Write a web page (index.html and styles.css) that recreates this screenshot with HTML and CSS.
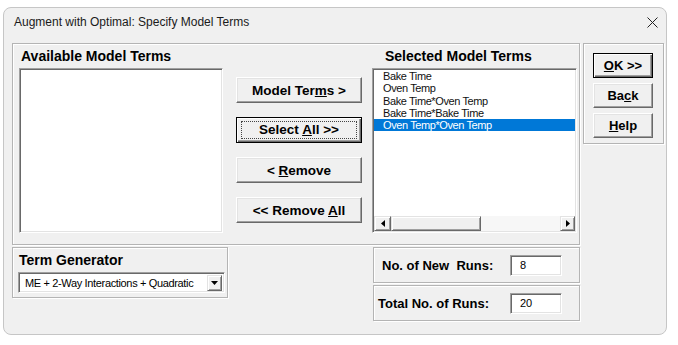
FILE: index.html
```html
<!DOCTYPE html>
<html lang="en">
<head>
    <meta charset="UTF-8">
    <title>Augment with Optimal: Specify Model Terms</title>
    <link rel="stylesheet" href="styles.css">
</head>
<body>

<div class="dialog">
    <div class="titlebar">
        <span class="title">Augment with Optimal: Specify Model Terms</span>
        <svg class="close" width="11" height="11" viewBox="0 0 11 11">
            <path d="M0.5 0.5 L10.5 10.5 M10.5 0.5 L0.5 10.5" stroke="#222" stroke-width="1"/>
        </svg>
    </div>

    <div class="content">
        <div class="top-row">
            <div class="group main-panel">
                <div class="col col-left">
                    <div class="heading">Available Model Terms</div>
                    <div class="listbox"></div>
                </div>

                <div class="col col-mid">
                    <button class="btn wide"><span>Model Ter<u>m</u>s &gt;</span></button>
                    <button class="btn wide default"><span class="focus">Select <u>A</u>ll &gt;&gt;</span></button>
                    <button class="btn wide"><span>&lt; <u>R</u>emove</span></button>
                    <button class="btn wide"><span>&lt;&lt; Remove <u>A</u>ll</span></button>
                </div>

                <div class="col col-right">
                    <div class="heading heading-right">Selected Model Terms</div>
                    <div class="listbox selected-list">
                        <ul class="items">
                            <li>Bake Time</li>
                            <li>Oven Temp</li>
                            <li>Bake Time*Oven Temp</li>
                            <li>Bake Time*Bake Time</li>
                            <li class="active">Oven Temp*Oven Temp</li>
                        </ul>
                        <div class="hscroll">
                            <span class="sb-btn sb-left">
                                <svg width="4" height="7" viewBox="0 0 4 7"><path d="M4 0 L0 3.5 L4 7 Z" fill="#000"/></svg>
                            </span>
                            <span class="sb-thumb"></span>
                            <span class="sb-track"></span>
                            <span class="sb-btn sb-right">
                                <svg width="4" height="7" viewBox="0 0 4 7"><path d="M0 0 L4 3.5 L0 7 Z" fill="#000"/></svg>
                            </span>
                        </div>
                    </div>
                </div>
            </div>

            <div class="group ok-panel">
                <button class="btn small default"><span><u>O</u>K &gt;&gt;</span></button>
                <button class="btn small"><span>Ba<u>c</u>k</span></button>
                <button class="btn small"><span><u>H</u>elp</span></button>
            </div>
        </div>

        <div class="bottom-row">
            <div class="group term-gen">
                <div class="heading">Term Generator</div>
                <div class="combo">
                    <span class="combo-text">ME + 2-Way Interactions + Quadratic</span>
                    <span class="drop">
                        <svg width="7" height="4" viewBox="0 0 7 4"><path d="M0 0 L7 0 L3.5 4 Z" fill="#000"/></svg>
                    </span>
                </div>
            </div>

            <div class="runs">
                <div class="group run-box new-runs">
                    <span class="run-label">No. of New&nbsp; Runs:</span>
                    <span class="field">8</span>
                </div>
                <div class="group run-box total-runs">
                    <span class="run-label">Total No. of Runs:</span>
                    <span class="field">20</span>
                </div>
            </div>
        </div>
    </div>
</div>

</body>
</html>
```

FILE: styles.css
```css
body {
    margin: 0;
    padding: 0;
    background-color: #fff;
    font-family: "Liberation Sans", Arial, sans-serif;
    color: #000;
}
.dialog {
    margin: 7px 0 0 3px;
    width: 664px;
    height: 328px;
    box-sizing: border-box;
    background-color: #f0f0f0;
    border: 1px solid #c6c6c6;
    border-radius: 8px;
}
.titlebar {
    height: 28px;
    padding: 0 8px 0 10px;
    display: flex;
    align-items: center;
    justify-content: space-between;
}
.title {
    font-size: 12px;
    color: #1a1a1a;
}
.close {
    display: block;
}
.content {
    padding: 7px 0 0 8px;
}
.top-row, .bottom-row {
    display: flex;
    align-items: flex-start;
}
.group {
    box-sizing: border-box;
    border: 1px solid #b4b4b4;
    box-shadow: inset 1px 1px #fff, 1px 1px #fff;
}
.main-panel {
    width: 568px;
    height: 202px;
    display: flex;
    padding-left: 6px;
}
.heading {
    height: 24px;
    line-height: 24px;
    font-size: 14px;
    font-weight: bold;
    padding-left: 2px;
    white-space: nowrap;
}
.heading-right {
    padding-left: 13px;
}
.col-left {
    width: 204px;
}
.col-mid {
    width: 126px;
    margin-left: 13px;
    padding-top: 33px;
    display: flex;
    flex-direction: column;
    gap: 14px;
}
.col-right {
    width: 205px;
    margin-left: 10px;
}
.listbox {
    height: 165px;
    box-sizing: border-box;
    background-color: #fff;
    border: 1px solid;
    border-color: #a0a0a0 #fff #fff #a0a0a0;
    box-shadow: inset 1px 1px #696969, inset -1px -1px #e3e3e3;
}
.selected-list {
    display: flex;
    flex-direction: column;
    padding: 1px;
}
.items {
    list-style: none;
    margin: 0;
    padding: 0;
    flex: 1;
    font-size: 11px;
    letter-spacing: -0.4px;
    line-height: 12.25px;
    color: #111;
}
.items li {
    padding-left: 9px;
    white-space: nowrap;
}
.items li.active {
    background-color: #0078d7;
    color: #fff;
}
.hscroll {
    height: 15px;
    display: flex;
}
.sb-btn, .sb-thumb {
    box-sizing: border-box;
    background-color: #f0f0f0;
    border: 1px solid;
    border-color: #e3e3e3 #696969 #696969 #e3e3e3;
    box-shadow: inset 1px 1px #fff, inset -1px -1px #a0a0a0;
    display: flex;
    align-items: center;
    justify-content: center;
}
.sb-left {
    width: 17px;
}
.sb-right {
    width: 15px;
}
.sb-thumb {
    width: 90px;
}
.sb-track {
    flex: 1;
    background-color: #f7f7f7;
}
.btn {
    box-sizing: border-box;
    padding: 0;
    margin: 0;
    font-family: "Liberation Sans", Arial, sans-serif;
    font-weight: bold;
    color: #000;
    background-color: #f0f0f0;
    border: 1px solid;
    border-color: #fff #696969 #696969 #fff;
    box-shadow: inset -1px -1px #a0a0a0, inset 1px 1px #e3e3e3;
    display: flex;
    align-items: center;
    justify-content: center;
    white-space: nowrap;
}
.btn u {
    text-underline-offset: 1px;
}
.wide {
    width: 126px;
    height: 26px;
    font-size: 13.5px;
}
.small {
    width: 60px;
    height: 25px;
    font-size: 13px;
}
.default {
    border: 1px solid #000;
    box-shadow: inset 1px 1px #fff, inset -1px -1px #696969, inset -2px -2px #a0a0a0;
}
.focus {
    display: block;
    box-sizing: border-box;
    width: 116px;
    height: 18px;
    line-height: 16px;
    text-align: center;
    border: 1px dotted #444;
}
.ok-panel {
    width: 81px;
    height: 101px;
    margin-left: 3px;
    padding: 9px 0 0 9px;
    display: flex;
    flex-direction: column;
    gap: 5px;
}
.bottom-row {
    margin-top: 2px;
}
.term-gen {
    width: 216px;
    height: 51px;
    padding-left: 5px;
}
.term-gen .heading {
    font-size: 14px;
    padding-left: 1px;
}
.combo {
    width: 207px;
    height: 21px;
    box-sizing: border-box;
    background-color: #fff;
    border: 1px solid;
    border-color: #a0a0a0 #fff #fff #a0a0a0;
    box-shadow: inset 1px 1px #696969, inset -1px -1px #e3e3e3;
    display: flex;
    align-items: center;
    justify-content: space-between;
    padding: 0 2px 0 6px;
}
.combo-text {
    font-size: 11px;
    letter-spacing: -0.35px;
    white-space: nowrap;
}
.drop {
    width: 15px;
    height: 16px;
    box-sizing: border-box;
    background-color: #f0f0f0;
    border: 1px solid;
    border-color: #e3e3e3 #696969 #696969 #e3e3e3;
    box-shadow: inset 1px 1px #fff, inset -1px -1px #a0a0a0;
    display: flex;
    align-items: center;
    justify-content: center;
}
.runs {
    width: 207px;
    margin-left: 145px;
    display: flex;
    flex-direction: column;
    gap: 2px;
}
.run-box {
    height: 36px;
    display: flex;
    align-items: center;
}
.new-runs {
    padding-left: 8px;
}
.new-runs .run-label {
    width: 128px;
}
.total-runs {
    padding-left: 4px;
}
.total-runs .run-label {
    width: 132px;
}
.run-label {
    font-size: 13px;
    font-weight: bold;
    white-space: nowrap;
}
.field {
    width: 52px;
    height: 21px;
    box-sizing: border-box;
    background-color: #fff;
    border: 1px solid;
    border-color: #a0a0a0 #fff #fff #a0a0a0;
    box-shadow: inset 1px 1px #696969, inset -1px -1px #e3e3e3;
    font-size: 11px;
    line-height: 19px;
    padding-left: 9px;
}
```
